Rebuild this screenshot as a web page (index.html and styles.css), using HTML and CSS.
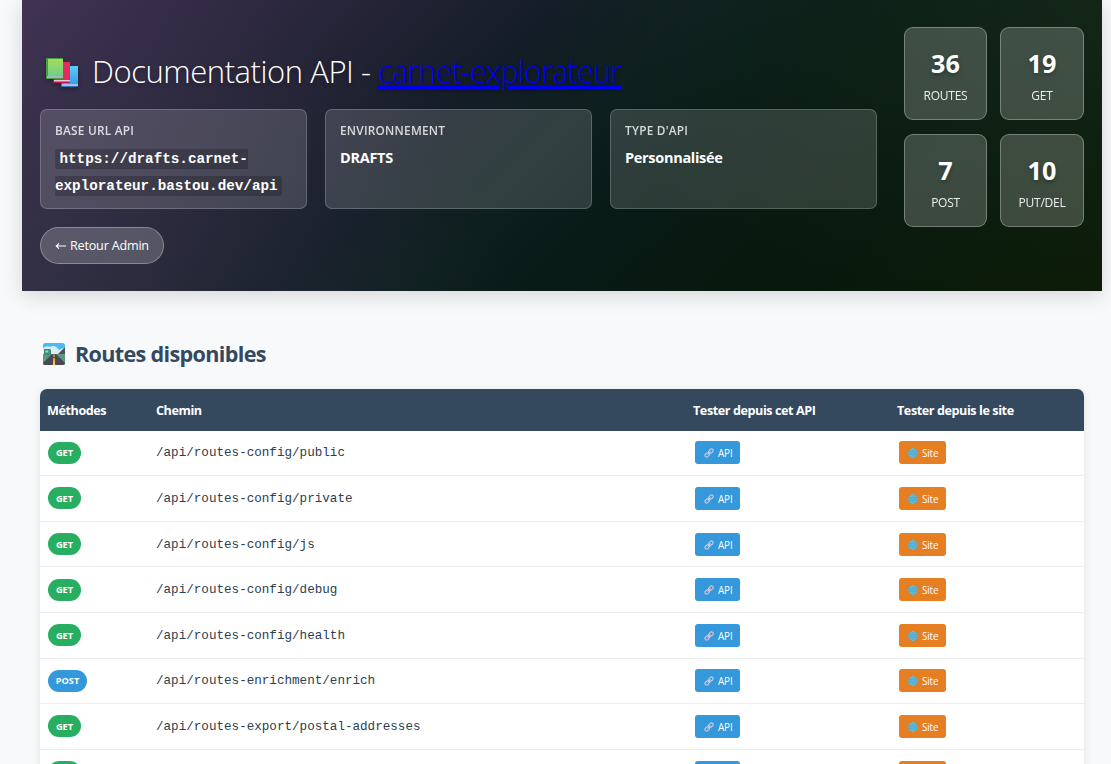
FILE: index.html
```html
<!DOCTYPE html>
<html lang="fr">
<head>
<meta charset="utf-8">
<title>Documentation API</title>
<link rel="stylesheet" href="styles.css">
</head>
<body>
<svg class="defs" aria-hidden="true">
  <defs>
    <linearGradient id="bg" x1="0" y1="0" x2="0" y2="1"><stop offset="0" stop-color="#a2dd59"/><stop offset="1" stop-color="#6fce8a"/></linearGradient>
    <linearGradient id="bb" x1="0" y1="0" x2="0" y2="1"><stop offset="0" stop-color="#58cef5"/><stop offset="1" stop-color="#399df0"/></linearGradient>
    <clipPath id="roadclip"><rect width="22" height="22" rx="2.5"/></clipPath>
  </defs>
  <symbol id="link" viewBox="0 0 12 12"><g fill="none" stroke="#d5c3dc" stroke-width="1.35" stroke-linecap="round"><rect x="5.3" y="1.8" width="6" height="4" rx="2" transform="rotate(-45 8.3 3.8)"/><rect x=".9" y="6.2" width="6" height="4" rx="2" transform="rotate(-45 3.9 8.2)"/><path d="M4.6 7.5l3-3"/></g></symbol>
  <symbol id="globe" viewBox="0 0 12 12"><circle cx="6" cy="6" r="5.8" fill="#2c9fd0"/><g fill="none" stroke="#86c3d0" stroke-width=".8"><circle cx="6" cy="6" r="5.3"/><ellipse cx="6" cy="6" rx="2.5" ry="5.3"/><path d="M6 1v10M1 6h10M1.8 3.4h8.4M1.8 8.6h8.4"/></g></symbol>
</svg>
<header class="hero">
  <div class="hero-main">
    <h1 class="title">
      <svg class="books" viewBox="0 0 32 29"><rect x="15" y="8" width="17" height="21" rx="1" fill="#287fc0"/><rect x="17" y="8" width="15" height="18" fill="url(#bb)"/><path d="M16 26h16v2H16z" fill="#b7b5e8"/><rect x="7" y="4" width="17" height="21" rx="1" fill="#b91547"/><rect x="9" y="4" width="15" height="18" fill="#e52b5c"/><path d="M8 22h16v1.5H8z" fill="#e9c8df"/><rect width="17" height="21" rx="1" fill="#4b9b42"/><rect x="2" y="1" width="15" height="17" fill="url(#bg)"/><path d="M1 18h16v2H1z" fill="#a4b5c1"/></svg>
      <span class="title-text">Documentation API - <a class="site" href="#">carnet-explorateur</a></span>
    </h1>
    <div class="cards">
      <div class="card"><div class="label">Base URL API</div><div class="value"><code class="url">https://drafts.carnet-<br>explorateur.bastou.dev/api</code></div></div>
      <div class="card"><div class="label">Environnement</div><div class="value">DRAFTS</div></div>
      <div class="card"><div class="label">Type d'API</div><div class="value">Personnalisée</div></div>
    </div>
    <a class="back"><svg class="arrow" viewBox="0 0 11 8"><path d="M11 4H1M4 1.3L1.2 4 4 6.7" fill="none" stroke="#fff" stroke-width="1.1"/></svg><span>Retour Admin</span></a>
  </div>
  <div class="stats">
    <div class="stat"><div class="num">36</div><div class="stat-label">Routes</div></div>
    <div class="stat"><div class="num">19</div><div class="stat-label">GET</div></div>
    <div class="stat"><div class="num">7</div><div class="stat-label">POST</div></div>
    <div class="stat"><div class="num">10</div><div class="stat-label">PUT/DEL</div></div>
  </div>
</header>
<main class="content">
  <h2 class="section"><svg class="road" viewBox="0 0 22 22"><g clip-path="url(#roadclip)"><path d="M0 0h22v22H0z" fill="#45bdf0"/><path d="M0 5q4-3 7-1 5-3 9 3l6-3v8H0z" fill="#dcecf6"/><path d="M15 11l7-7v8z" fill="#524d62"/><path d="M0 11h22v11H0z" fill="#5b9b7c"/><path d="M9 11h4l9 9v2H0v-2z" fill="#4d465b"/><path d="M1 6h6l1 1v5H1z" fill="#398f7b"/><path d="M2.3 7.5h3v2h-3z" fill="#a3d4be"/><path d="M10.6 11h.8l.2 3h-1.2zM10.3 15h1.4l.5 7h-2.4z" fill="#f5c338"/></g></svg><span>Routes disponibles</span></h2>
  <table class="routes">
    <colgroup><col class="c1"><col class="c2"><col class="c3"><col class="c4"></colgroup>
    <thead><tr><th>Méthodes</th><th>Chemin</th><th>Tester depuis cet API</th><th>Tester depuis le site</th></tr></thead>
    <tbody>
      <tr><td><span class="badge">GET</span></td><td class="path">/api/routes-config/public</td><td><a class="btn api"><svg class="ic"><use href="#link"/></svg>API</a></td><td><a class="btn web"><svg class="ic"><use href="#globe"/></svg>Site</a></td></tr>
      <tr><td><span class="badge">GET</span></td><td class="path">/api/routes-config/private</td><td><a class="btn api"><svg class="ic"><use href="#link"/></svg>API</a></td><td><a class="btn web"><svg class="ic"><use href="#globe"/></svg>Site</a></td></tr>
      <tr><td><span class="badge">GET</span></td><td class="path">/api/routes-config/js</td><td><a class="btn api"><svg class="ic"><use href="#link"/></svg>API</a></td><td><a class="btn web"><svg class="ic"><use href="#globe"/></svg>Site</a></td></tr>
      <tr><td><span class="badge">GET</span></td><td class="path">/api/routes-config/debug</td><td><a class="btn api"><svg class="ic"><use href="#link"/></svg>API</a></td><td><a class="btn web"><svg class="ic"><use href="#globe"/></svg>Site</a></td></tr>
      <tr><td><span class="badge">GET</span></td><td class="path">/api/routes-config/health</td><td><a class="btn api"><svg class="ic"><use href="#link"/></svg>API</a></td><td><a class="btn web"><svg class="ic"><use href="#globe"/></svg>Site</a></td></tr>
      <tr><td><span class="badge post">POST</span></td><td class="path">/api/routes-enrichment/enrich</td><td><a class="btn api"><svg class="ic"><use href="#link"/></svg>API</a></td><td><a class="btn web"><svg class="ic"><use href="#globe"/></svg>Site</a></td></tr>
      <tr><td><span class="badge">GET</span></td><td class="path">/api/routes-export/postal-addresses</td><td><a class="btn api"><svg class="ic"><use href="#link"/></svg>API</a></td><td><a class="btn web"><svg class="ic"><use href="#globe"/></svg>Site</a></td></tr>
      <tr><td><span class="badge"></span></td><td class="path"></td><td><a class="btn api"></a></td><td><a class="btn web"></a></td></tr>
    </tbody>
  </table>
</main>
</body>
</html>
```

FILE: styles.css
```css
* { box-sizing: border-box; }
html { height: 764px; overflow: hidden; }
body {
  margin: 0;
  height: 764px;
  overflow: hidden;
  background: #f8f9fb;
  color: #2c3e50;
  font-family: "Open Sans", "Noto Sans", sans-serif;
}
.defs { position: absolute; width: 0; height: 0; }

.hero {
  display: flex;
  align-items: flex-start;
  gap: 27px;
  width: 1080px;
  height: 291px;
  margin-left: 22px;
  padding: 27px 18px;
  color: #fff;
  background:
    radial-gradient(ellipse 560px 320px at 100% 0, rgba(30, 52, 36, .5), transparent),
    radial-gradient(ellipse 480px 330px at 0 100%, rgba(62, 60, 80, .45), transparent),
    linear-gradient(135deg, #413254 0%, #212233 29%, #131d26 40%, #0d1f1e 50%, #071a15 60%, #07180d 75%, #0c1a06 100%);
  box-shadow: 0 4px 20px rgba(0, 0, 0, .15);
}
.hero-main { width: 837px; }
.title {
  display: flex;
  align-items: center;
  height: 82px;
  margin: 0;
  padding: 8px 0 0 6px;
  font-size: 31px;
  font-weight: 300;
  line-height: 40px;
  white-space: nowrap;
}
.books { width: 32px; height: 29px; margin-right: 14px; filter: drop-shadow(0 2px 2px rgba(0, 0, 0, .3)); }
.title-text { padding-bottom: 2px; letter-spacing: -.45px; text-shadow: 0 2px 4px rgba(0, 0, 0, .3); }
.site { color: #00e; letter-spacing: -1px; text-decoration-thickness: 3px; text-underline-offset: 3px; }
.cards { display: grid; grid-template-columns: repeat(3, 267px); gap: 18px; }
.card {
  height: 100px;
  padding: 11px 14px;
  border: 1px solid rgba(255, 255, 255, .2);
  border-radius: 7px;
  background: rgba(255, 255, 255, .15);
}
.label { font-size: 11.8px; line-height: 18px; font-weight: 600; letter-spacing: .25px; text-transform: uppercase; opacity: .8; }
.value { margin-top: 5px; font-size: 14.5px; line-height: 27px; font-weight: 700; letter-spacing: -.3px; }
.url {
  padding: 2px 4.5px;
  border-radius: 3px;
  background: rgba(0, 0, 0, .2);
  font-family: "Liberation Mono", monospace;
  font-size: 14.27px;
  line-height: 20px;
  letter-spacing: 0;
  white-space: nowrap;
}
.back {
  display: flex;
  align-items: center;
  gap: 4px;
  width: 124px;
  height: 37px;
  margin-top: 18px;
  padding-left: 14px;
  border: 1px solid rgba(255, 255, 255, .3);
  border-radius: 19px;
  background: rgba(255, 255, 255, .2);
  font-size: 12.6px;
  font-weight: 500;
  letter-spacing: -.2px;
  white-space: nowrap;
}
.arrow { width: 11px; height: 8px; }

.stats { display: grid; grid-template-columns: 83px 84px; gap: 14px 13px; }
.stat {
  height: 93px;
  padding-top: 17px;
  border: 1px solid rgba(255, 255, 255, .3);
  border-radius: 9px;
  background: rgba(255, 255, 255, .2);
  text-align: center;
}
.num { font-size: 25.2px; line-height: 36px; font-weight: 700; text-shadow: 0 2px 4px rgba(0, 0, 0, .3); }
.stat-label { margin-top: 5px; font-size: 12px; line-height: 19px; font-weight: 500; text-transform: uppercase; opacity: .9; letter-spacing: -.25px; }

.content { width: 1044px; margin-left: 40px; padding-top: 45px; }
.section {
  display: flex;
  align-items: center;
  gap: 10px;
  height: 36px;
  margin: 0 0 17px;
  padding-left: 3px;
  color: #34495e;
  font-size: 21.6px;
  font-weight: 700;
  letter-spacing: -.67px;
  white-space: nowrap;
}
.section span { padding-bottom: 2px; }
.road { width: 22px; height: 22px; }
.routes {
  width: 1044px;
  table-layout: fixed;
  border-collapse: separate;
  border-spacing: 0;
  border-radius: 7px;
  overflow: hidden;
  background: #fff;
  box-shadow: 0 2px 10px rgba(0, 0, 0, .1);
}
.c1 { width: 109px; }
.c2 { width: 537px; }
.c3 { width: 204px; }
.c4 { width: 194px; }
.routes th {
  height: 41.6px;
  padding: 2px 7px 0;
  background: #34495e;
  color: #fff;
  font-size: 12.6px;
  font-weight: 700;
  letter-spacing: -.42px;
  text-align: left;
  white-space: nowrap;
}
.routes td { height: 45.6px; padding: 0 7px; border-bottom: 1px solid #ecf0f1; vertical-align: middle; }
.routes .path { padding-top: 1px; font: 12.6px "Liberation Mono", monospace; }
.badge {
  display: flex;
  align-items: center;
  justify-content: center;
  width: 33px;
  height: 22px;
  margin-left: 1px;
  border-radius: 11px;
  background: #27ae60;
  color: #fff;
  font-size: 9.2px;
  font-weight: 700;
}
.post { width: 39px; background: #3498db; }
.btn {
  display: flex;
  align-items: center;
  gap: 4px;
  height: 23px;
  margin-left: 2px;
  padding: 1px 0 0 9px;
  border-radius: 3px;
  color: #fff;
  font-size: 9.9px;
  font-weight: 500;
  letter-spacing: -.15px;
  white-space: nowrap;
}
.ic { width: 10px; height: 10px; }
.api { width: 45px; background: #3498db; }
.web { width: 47px; background: #e67e22; }
```
